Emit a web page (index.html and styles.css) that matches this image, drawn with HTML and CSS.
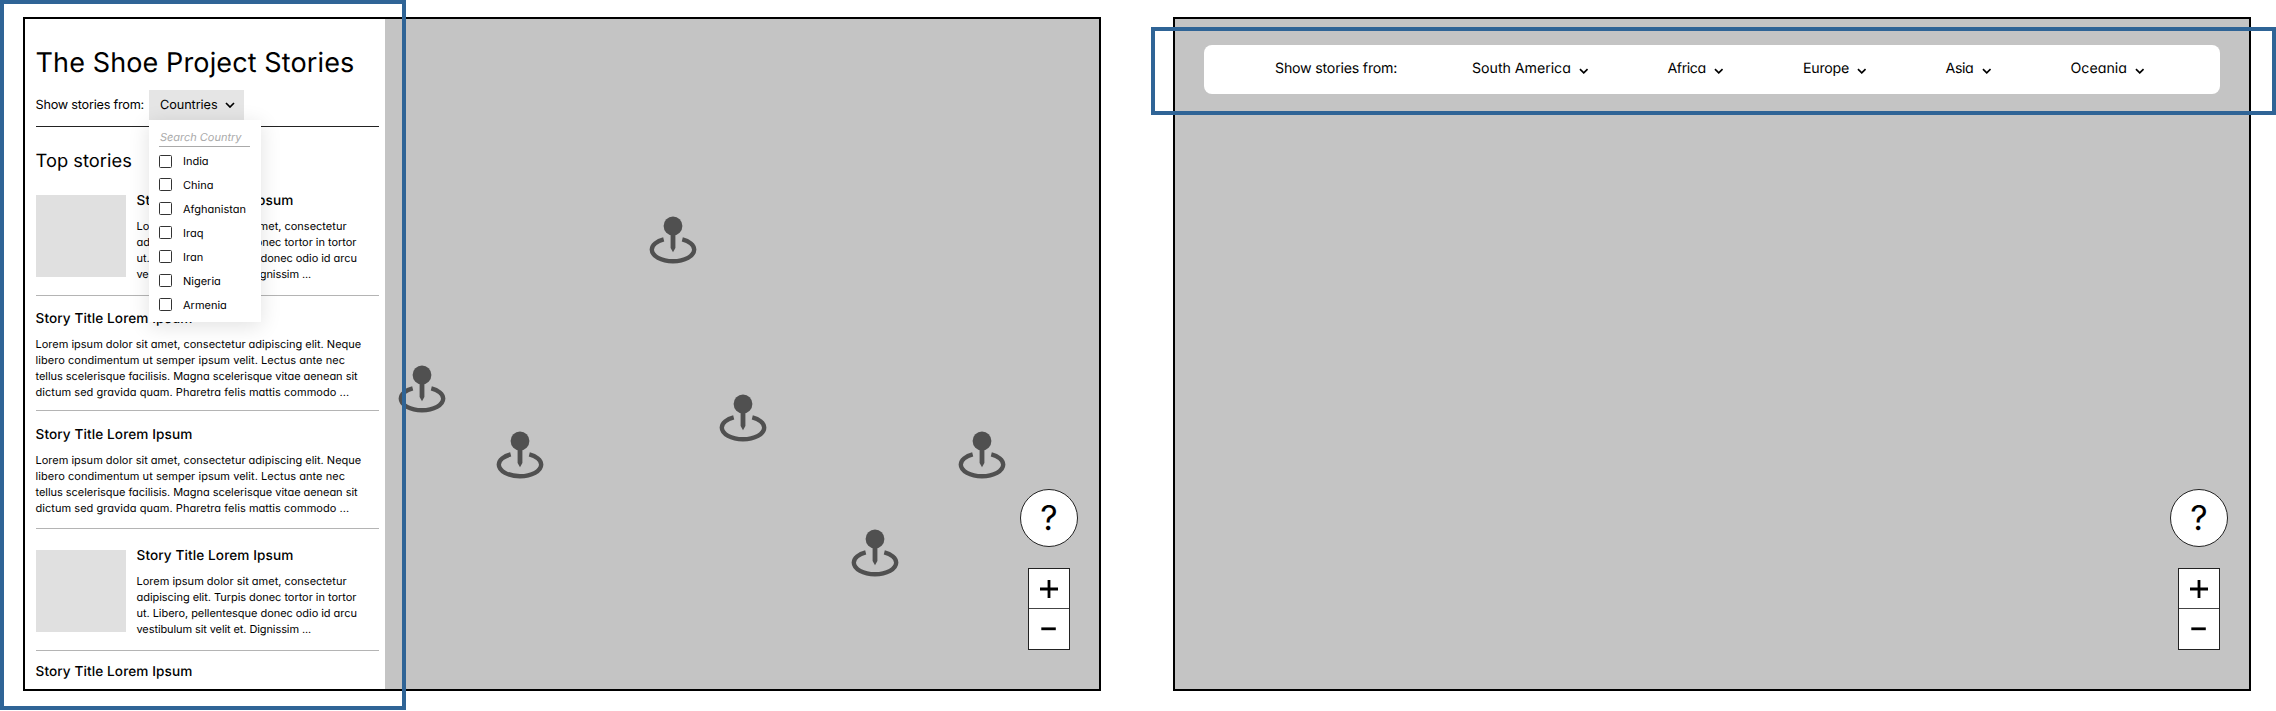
FILE: index.html
```html
<!DOCTYPE html>
<html lang="en">
<head>
<meta charset="utf-8">
<title>The Shoe Project Stories</title>
<link rel="stylesheet" href="styles.css">
</head>
<body>
<svg class="defs" aria-hidden="true">
  <symbol id="pin" viewBox="-24 -10 48 48">
    <circle cx="0" cy="0" r="9.4"/>
    <path d="M-2.4 6H2.4V22L0 26.2L-2.4 22Z"/>
    <path d="M-9.3 13.4C-16 15.1-21.2 19-21.2 23.6C-21.2 30.1-11.7 35.2 0 35.2S21.2 30.1 21.2 23.6C21.2 19 16 15.1 9.3 13.4" fill="none" stroke="#505050" stroke-width="4.4"/>
  </symbol>
  <symbol id="chevron" viewBox="0 0 10 6">
    <path d="M1 1L5 5L9 1" fill="none" stroke="#000" stroke-width="1.7"/>
  </symbol>
</svg>

<main class="board">
  <section class="frame">
    <aside class="sidebar">
      <h1 class="heading">The Shoe Project Stories</h1>
      <div class="filter">
        <span class="filter-label">Show stories from:</span>
        <div class="select">
          <span class="select-text">Countries</span>
          <svg class="select-chevron"><use href="#chevron"/></svg>
          <div class="menu">
            <div class="search">Search Country</div>
            <ul class="options">
              <li><i class="box"></i>India</li>
              <li><i class="box"></i>China</li>
              <li><i class="box"></i>Afghanistan</li>
              <li><i class="box"></i>Iraq</li>
              <li><i class="box"></i>Iran</li>
              <li><i class="box"></i>Nigeria</li>
              <li><i class="box"></i>Armenia</li>
            </ul>
          </div>
        </div>
      </div>
      <h2 class="subheading">Top stories</h2>

      <article class="story with-image first">
        <div class="thumb"></div>
        <div>
          <h3 class="title">Story Title Lorem Ipsum</h3>
          <p class="text">Lorem ipsum dolor sit amet, consectetur<br><span class="snug">adipiscing elit. Turpis donec tortor in tortor</span><br><span class="snug">ut. Libero, pellentesque donec odio id arcu</span><br><span class="tight">vestibulum sit velit et. Dignissim ...</span></p>
        </div>
      </article>
      <article class="story">
        <h3 class="title">Story Title Lorem Ipsum</h3>
        <p class="text">Lorem ipsum dolor sit amet, consectetur adipiscing elit. Neque<br><span class="loose">libero condimentum ut semper ipsum velit. Lectus ante nec</span><br><span class="snug">tellus scelerisque facilisis. Magna scelerisque vitae aenean sit</span><br><span class="loose">dictum sed gravida quam. Pharetra felis mattis commodo ...</span></p>
      </article>
      <article class="story third">
        <h3 class="title">Story Title Lorem Ipsum</h3>
        <p class="text">Lorem ipsum dolor sit amet, consectetur adipiscing elit. Neque<br><span class="loose">libero condimentum ut semper ipsum velit. Lectus ante nec</span><br><span class="snug">tellus scelerisque facilisis. Magna scelerisque vitae aenean sit</span><br><span class="loose">dictum sed gravida quam. Pharetra felis mattis commodo ...</span></p>
      </article>
      <article class="story with-image fourth">
        <div class="thumb"></div>
        <div>
          <h3 class="title">Story Title Lorem Ipsum</h3>
          <p class="text">Lorem ipsum dolor sit amet, consectetur<br><span class="snug">adipiscing elit. Turpis donec tortor in tortor</span><br><span class="snug">ut. Libero, pellentesque donec odio id arcu</span><br><span class="tight">vestibulum sit velit et. Dignissim ...</span></p>
        </div>
      </article>
      <article class="story last">
        <h3 class="title">Story Title Lorem Ipsum</h3>
      </article>
    </aside>
    <div class="map">
      <svg class="pin pin-a"><use href="#pin"/></svg>
      <svg class="pin pin-b"><use href="#pin"/></svg>
      <svg class="pin pin-c"><use href="#pin"/></svg>
      <svg class="pin pin-d"><use href="#pin"/></svg>
      <svg class="pin pin-e"><use href="#pin"/></svg>
      <svg class="pin pin-f"><use href="#pin"/></svg>
      <div class="controls">
        <div class="help">?</div>
        <div class="zoom">
          <div class="zoom-in"><svg viewBox="0 0 20 20"><path d="M1 10H19M10 1V19"/></svg></div>
          <div class="zoom-out"><svg viewBox="0 0 20 20"><path d="M2.3 9.8H16.8"/></svg></div>
        </div>
      </div>
    </div>
  </section>

  <section class="frame">
    <nav class="bar">
      <span class="bar-label">Show stories from:</span>
      <span class="item south">South America<svg><use href="#chevron"/></svg></span>
      <span class="item africa">Africa<svg><use href="#chevron"/></svg></span>
      <span class="item europe">Europe<svg><use href="#chevron"/></svg></span>
      <span class="item asia">Asia<svg><use href="#chevron"/></svg></span>
      <span class="item oceania">Oceania<svg><use href="#chevron"/></svg></span>
    </nav>
    <div class="controls">
      <div class="help">?</div>
      <div class="zoom">
        <div class="zoom-in"><svg viewBox="0 0 20 20"><path d="M1 10H19M10 1V19"/></svg></div>
        <div class="zoom-out"><svg viewBox="0 0 20 20"><path d="M2.3 9.8H16.8"/></svg></div>
      </div>
    </div>
  </section>

  <div class="highlight highlight-panel"></div>
  <div class="highlight highlight-bar"></div>
</main>
</body>
</html>
```
FILE: styles.css
```css
* { box-sizing: border-box; margin: 0; padding: 0; }

body {
  background: #fff;
  color: #000;
  font-family: Inter, "Open Sans", sans-serif;
  font-feature-settings: "cv11";
  text-rendering: geometricPrecision;
}

.defs { position: absolute; width: 0; height: 0; }

.board {
  position: relative;
  display: flex;
  gap: 72px;
  width: 2276px;
  height: 711px;
  padding: 17px 0 0 23px;
  overflow: hidden;
}

.frame {
  position: relative;
  display: flex;
  width: 1078px;
  height: 674px;
  border: 2px solid #000;
  background: #c4c4c4;
}

/* Sidebar */
.sidebar {
  width: 360px;
  padding: 24px 6px 0 10.5px;
  background: #fff;
  overflow: hidden;
}

.heading { font-size: 27px; font-weight: 400; line-height: 40px; letter-spacing: .12px; white-space: nowrap; }

.filter {
  display: flex;
  height: 44px;
  padding-top: 7px;
  border-bottom: 1px solid #222;
}
.filter-label {
  width: 113.5px;
  font-size: 12.7px;
  line-height: 31px;
  letter-spacing: -.23px;
  white-space: nowrap;
}
.select {
  position: relative;
  display: flex;
  width: 94.5px;
  height: 30px;
  padding-left: 11px;
  background: #e5e5e5;
  font-size: 12.7px;
  line-height: 31px;
  letter-spacing: -.07px;
}
.select-text { width: 65px; }
.select-chevron { width: 10px; height: 6px; margin-top: 12px; }

.menu {
  position: absolute;
  z-index: 2;
  top: 30px;
  left: 0;
  width: 112px;
  height: 202px;
  padding: 12px 11px 0 10px;
  background: #fff;
  box-shadow: 0 4px 20px rgba(0, 0, 0, .12);
}
.search {
  height: 15px;
  padding-left: 1px;
  border-bottom: 1px solid #aaa;
  color: #aaa;
  font-size: 11px;
  font-style: italic;
  line-height: 10px;
  letter-spacing: -.02px;
}
.options {
  padding-top: 7px;
  list-style: none;
  font-size: 11px;
  line-height: 14px;
  letter-spacing: 0;
}
.options li { display: flex; align-items: center; gap: 11px; height: 14px; margin-bottom: 9.95px; white-space: nowrap; }
.box { width: 13px; height: 13px; border: 1px solid #333; border-radius: 1.5px; }

.subheading { margin: 22px 0 18px; font-size: 18.3px; font-weight: 400; line-height: 24px; letter-spacing: .04px; }

/* Stories */
.story { height: 115px; padding-top: 13px; border-bottom: 1px solid #b4b4b4; }
.title { font-size: 13.6px; font-weight: 500; line-height: 20px; letter-spacing: .1px; white-space: nowrap; }
.text { margin-top: 7px; font-size: 11px; line-height: 16px; white-space: nowrap; }
.with-image { display: flex; gap: 11px; }
.thumb { width: 90px; height: 82px; margin-top: 4px; background: #e0e0e0; }
.first { height: 105px; padding-top: 0; }
.third { height: 118px; padding-top: 13.5px; }
.fourth { height: 122px; padding-top: 17px; }
.last { padding-top: 10.5px; border: 0; }
.loose { letter-spacing: .042px; }
.snug { letter-spacing: -.045px; }
.tight { letter-spacing: -.1px; }

/* Map canvas */
.map { position: relative; flex: 1; }
.pin { position: absolute; width: 48px; height: 48px; fill: #505050; }
.pin-a { left: 13.2px; top: 346.3px; }
.pin-b { left: 110.5px; top: 412.2px; }
.pin-c { left: 264px; top: 197px; }
.pin-d { left: 334.3px; top: 374.5px; }
.pin-e { left: 465.8px; top: 509.5px; }
.pin-f { left: 572.7px; top: 412.4px; }

.controls {
  position: absolute;
  right: 21px;
  bottom: 39px;
  display: flex;
  flex-direction: column;
  align-items: center;
  gap: 21px;
}
.help {
  width: 58px;
  height: 58px;
  border: 1px solid #222;
  border-radius: 50%;
  background: #fff;
  font-size: 34px;
  line-height: 57px;
  text-align: center;
}
.zoom { width: 42px; border: 1px solid #222; background: #fff; }
.zoom div { display: flex; height: 40px; align-items: center; justify-content: center; }
.zoom .zoom-in { border-bottom: 1px solid #444; }
.zoom svg { width: 20px; height: 20px; stroke: #000; stroke-width: 2.8; }

/* Region bar */
.bar {
  display: flex;
  align-items: center;
  width: 1016px;
  height: 49px;
  margin: 26px 0 0 29px;
  padding: 0 0 1px 71px;
  border-radius: 8px;
  background: #fff;
  font-size: 14.2px;
  line-height: 20px;
  white-space: nowrap;
}
.bar-label { width: 197px; letter-spacing: -.21px; }
.item { display: flex; align-items: center; justify-content: space-between; }
.item svg { width: 9.5px; height: 6px; margin-top: 3px; }
.south { width: 116.5px; margin-right: 79px; letter-spacing: -.04px; }
.africa { width: 56px; margin-right: 79.5px; letter-spacing: -.42px; }
.europe { width: 63.5px; margin-right: 79px; letter-spacing: -.25px; }
.asia { width: 45.5px; margin-right: 79.5px; letter-spacing: -.4px; }
.oceania { width: 74px; }

/* Callout outlines */
.highlight { position: absolute; z-index: 5; border: 4px solid #2f6496; }
.highlight-panel { left: 0; top: 0; width: 406px; height: 710px; }
.highlight-bar { left: 1151px; top: 27px; width: 1125px; height: 88px; }
```
